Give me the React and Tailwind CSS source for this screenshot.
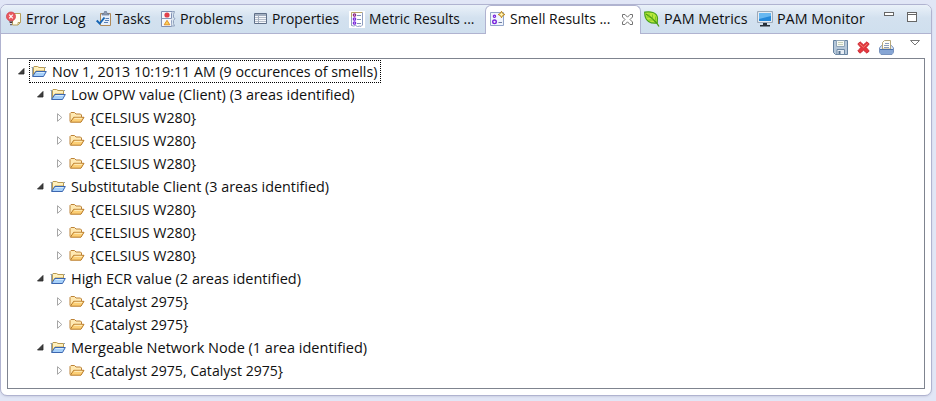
import React, { useLayoutEffect, useRef, useState } from "react";

// Label whose glyphs are condensed to fill exactly `w` pixels.
function Label({ w, children }) {
  const ref = useRef(null);
  const [scale, setScale] = useState(1);
  useLayoutEffect(() => {
    setScale(w / ref.current.offsetWidth);
  }, [w, children]);
  return (
    <span className="block shrink-0 whitespace-nowrap" style={{ width: w }}>
      <span ref={ref} className="inline-block origin-left" style={{ transform: `scaleX(${scale})` }}>
        {children}
      </span>
    </span>
  );
}

function Icon({ children, w = 16, h = 16 }) {
  return (
    <svg className="block shrink-0" width={w} height={h} viewBox={`0 0 ${w} ${h}`} fill="none">
      {children}
    </svg>
  );
}

const ErrorLogIcon = () => (
  <Icon>
    <path d="M6.5 2.5h8v9l-2.500 2.500h-5.500z" fill="#fffdf0" stroke="#b8a05c" />
    <path d="M14.500 11.500h-2.500v2.500" stroke="#b8a05c" />
    <circle cx="5" cy="5.500" r="4.500" fill="#ea5a60" stroke="#d0404c" strokeWidth=".8" />
    <path d="M3.200 3.700l3.600 3.600M6.800 3.700l-3.600 3.600" stroke="#fff" strokeWidth="1.200" />
    <path d="M3 10.500h4l-1 1.500H4zM4.300 13h1.400v1.300H4.300z" fill="#4b3438" />
  </Icon>
);

const TasksIcon = () => (
  <Icon>
    <path d="M4.500 2.500h10v12h-10z" fill="#e6effa" stroke="#b08a58" />
    <path d="M6 4V2.500h2L8.500.500h2l.500 2h2V4z" fill="#8f9db5" stroke="#66758f" strokeWidth=".7" />
    <path d="M9.500 7.500H13M9 9.500h4M8 11.500h4" stroke="#5a80b5" />
    <path d="M.7 9.500l3 3L8.500 6.500" stroke="#1766b4" strokeWidth="2" />
  </Icon>
);

const ProblemsIcon = () => (
  <Icon>
    <path d="M.500.500h11L10.500 3v4l1 1-1 2v5.500H.500z" fill="#f6f8fc" stroke="#8090b4" />
    <path d="M.500 7.500h10" stroke="#8998b8" />
    <path d="M11.500.500h2l-1 3v3l1.500 1-1.500 2v3l1 2.500h-3" fill="#dbe6f1" stroke="#91a2bd" />
    <circle cx="6" cy="4" r="2.600" fill="#e2414c" />
    <path d="M6 9.300l2.800 4.500H3.200z" fill="#fbd257" stroke="#dd8620" strokeWidth=".9" />
  </Icon>
);

const PropertiesIcon = () => (
  <Icon>
    <path d="M.500 2.500h12v10H.500z" fill="#f5f7fb" stroke="#607089" />
    <path d="M1 3h11v2H1z" fill="#a3afc0" />
    <path d="M1 6.500h11M1 8.500h11M1 10.500h11" stroke="#b5bdc9" />
    <path d="M4.500 5v7" stroke="#a3afc0" />
  </Icon>
);

const Bullets = () => (
  <>
    <circle cx="5.500" cy="4" r="1.200" stroke="#8b2585" strokeWidth="1.200" />
    <circle cx="5.500" cy="8" r="1.200" stroke="#7a25dc" strokeWidth="1.300" />
    <circle cx="5.500" cy="12" r="1.200" stroke="#7a25dc" strokeWidth="1.300" />
  </>
);

const MetricIcon = () => (
  <Icon h={17}>
    <path d="M0 0h16v17H0z" fill="#fff" />
    <path d="M2.500 14.500V1.500h11" stroke="#b7a46b" />
    <path d="M2.500 6v8.500l2 .500 2-.500 2 1 2.500-.500 1 .500 1.500-1.500V1.500" stroke="#8e9dc0" />
    <Bullets />
    <path d="M8 4.500h4M8 8.500h4M8 12.500h4" stroke="#7f91b4" />
  </Icon>
);

const SmellIcon = () => (
  <Icon>
    <path d="M.500 1.500h13v13H.500z" fill="#f1f5fd" stroke="#93a5c9" />
    <circle cx="4.500" cy="5.200" r="1.100" stroke="#7a25dc" strokeWidth="1.200" />
    <circle cx="4.500" cy="10.800" r="1.800" stroke="#7a25dc" strokeWidth="1.400" />
    <path d="M8.500 11.500h3.500" stroke="#6d7da0" />
    <path d="M11.500.300l1.100 2.100 2.200 1.100-2.200 1.100-1.100 2.100-1.100-2.100-2.200-1.100 2.200-1.100z" fill="#fff3b0" stroke="#b98213" />
  </Icon>
);

const LeafIcon = () => (
  <Icon>
    <path d="M.700 1.200C6 .200 13 1 13.500 7l-.300 5C7 13 .500 10.500.700 1.200z" fill="#b9e83a" stroke="#4aa31c" strokeWidth="1.200" />
    <path d="M2 3c4 2.500 8 5.500 11 9.500l2 3" stroke="#4c9e12" strokeWidth="1.300" />
    <path d="M5 2.500v2.500M8.500 3.500v4M11.500 5.500v4M2.500 6h3.500M4.500 9h5" stroke="#70bc24" strokeWidth=".8" />
  </Icon>
);

const MonitorIcon = () => (
  <Icon>
    <path d="M1.500 1.500h13v9h-13z" fill="#2589da" stroke="#e8edf3" />
    <path d="M.500.500h15v11H.500z" stroke="#9daab8" />
    <path d="M2 2h12v3L2 8z" fill="#68b8f1" />
    <path d="M6 12h4v2h3v1.500H3V14h3z" fill="#28313b" />
  </Icon>
);

const CloseIcon = () => (
  <Icon w={11} h={11}>
    <path d="M.500.500h2.500l2.500 2.700L8 .500h2.500V3L8 5.500 10.500 8v2.500H8L5.500 7.800 3 10.500H.500V8L3 5.500.500 3z" fill="#fff" stroke="#737373" />
  </Icon>
);

const SaveIcon = () => (
  <Icon w={15} h={15}>
    <path d="M.500.500h14v14h-12l-2-2z" fill="#b5c7d9" stroke="#6683a1" />
    <path d="M3.500.500h8v6h-8z" fill="#f7f9f3" stroke="#8fa4b8" />
    <path d="M5 2.500h5M5 4.500h5" stroke="#c5cfb8" />
    <path d="M4 9.500h7.500v5H4z" fill="#e6edf4" stroke="#6d88a4" />
    <path d="M5.500 11h2v3h-2z" fill="#54718f" />
  </Icon>
);

const DeleteIcon = () => (
  <Icon w={13} h={13}>
    <path d="M.800 3L3 .800l3.500 3L10 .800 12.200 3 9.200 6.500l3 3.500-2.200 2.200-3.500-3-3.500 3L.800 10l3-3.500z" fill="#e5383f" stroke="#cb2c36" />
    <path d="M2.500 2.700l4 3.500 4-3.500" stroke="#ef8070" />
  </Icon>
);

const PrintIcon = () => (
  <Icon w={15} h={15}>
    <path d="M2.500 5.500h10l2 2.500v4.500l-1.500 2H2l-1.500-2V8z" fill="#dbe6f5" stroke="#7792bd" />
    <path d="M3.500 9V2.500l2-2h6V9z" fill="#fffef6" stroke="#b5a77b" />
    <path d="M6 3.500h4M5 5.500h5M5 7.500h5" stroke="#7f93b5" strokeWidth=".9" />
    <path d="M1 9.500h13v3l-1 1.500H2l-1-1.500z" fill="#86a5d4" />
    <path d="M1 9.500h13" stroke="#4d72ac" />
  </Icon>
);

const OpenFolder = () => (
  <Icon w={16} h={13}>
    <path d="M2.500 10.500v-8M2.500 2.500l.500-1h3.500l1.500 1h5.500v3.500H5l-2.500 4" fill="#fff1bd" stroke="#b99a52" />
    <path d="M.500 2.500h2M13.500 2.500h1.500M1.500 3v8" stroke="#8ea0b0" />
    <path d="M4.800 6.500h10.500l-2.800 5H1.600z" fill="#a6d0fa" stroke="#3c67b0" />
    <path d="M5.500 7.500h8" stroke="#d7edff" />
  </Icon>
);

const ClosedFolder = () => (
  <Icon w={16} h={13}>
    <path d="M1 10.500v-8l1-1h3.500l1.500 1.500h4.500l1 1v2.500" fill="#ffe9b2" stroke="#bd8338" />
    <path d="M4.700 6.300h10.300l-3 4.900H1.400z" fill="#fccf76" stroke="#b87a28" />
    <path d="M5.300 7.300h8" stroke="#fff0c4" />
  </Icon>
);

const Expanded = () => (
  <Icon w={7} h={7}>
    <path d="M6 .500v5.500H.500z" fill="#404040" stroke="#262626" strokeWidth=".8" />
  </Icon>
);

const Collapsed = () => (
  <Icon w={6} h={9}>
    <path d="M.500.700v7.600l4.300-3.800z" fill="#fff" stroke="#a6a6a6" />
  </Icon>
);

const tabs = [
  { text: "Error Log", icon: ErrorLogIcon, cell: "w-[90px] pl-[5px] gap-1", w: 60 },
  { text: "Tasks", icon: TasksIcon, cell: "w-[65px] pl-[5px] gap-[3px]", w: 35 },
  { text: "Problems", icon: ProblemsIcon, cell: "w-[93px] pl-[5px] gap-[3px]", w: 63 },
  { text: "Properties", icon: PropertiesIcon, cell: "w-[95px] pl-[5px] gap-[2px]", w: 67 },
  { text: "Metric Results ...", icon: MetricIcon, cell: "w-[141px] pl-[5px] gap-1", w: 105 },
  { text: "Smell Results ...", icon: SmellIcon, active: true, w: 100 },
  { text: "PAM Metrics", icon: LeafIcon, cell: "w-[111px] pl-[3px] gap-1", w: 84 },
  { text: "PAM Monitor", icon: MonitorIcon, cell: "w-[125px] pl-[5px] gap-1", w: 88 },
];

const celsius = { level: 2, text: "{CELSIUS W280}", w: 106 };
const catalyst = { level: 2, text: "{Catalyst 2975}", w: 98 };
const rows = [
  { level: 0, text: "Nov 1, 2013 10:19:11 AM (9 occurences of smells)", w: 325 },
  { level: 1, text: "Low OPW value (Client) (3 areas identified)", w: 284 },
  celsius,
  celsius,
  celsius,
  { level: 1, text: "Substitutable Client (3 areas identified)", w: 258 },
  celsius,
  celsius,
  celsius,
  { level: 1, text: "High ECR value (2 areas identified)", w: 230 },
  catalyst,
  catalyst,
  { level: 1, text: "Mergeable Network Node (1 area identified)", w: 296 },
  { level: 2, text: "{Catalyst 2975, Catalyst 2975}", w: 193 },
];

const indent = ["pl-[9px]", "pl-[28px]", "pl-[48px]"];

function Tab({ text, icon: Glyph, cell, active, w }) {
  if (active) {
    return (
      <div className="flex h-[29px] w-[156px] shrink-0 items-center rounded-t-[6px] border-x border-t border-[#b0b3d0] bg-white pb-[2px] pl-1">
        <Glyph />
        <div className="ml-1">
          <Label w={w}>{text}</Label>
        </div>
        <div className="ml-[12px]">
          <CloseIcon />
        </div>
      </div>
    );
  }
  return (
    <div className={`flex h-7 shrink-0 items-center ${cell}`}>
      <Glyph />
      <Label w={w}>{text}</Label>
    </div>
  );
}

function Row({ level, text, w }) {
  return (
    <div className={`flex h-[23px] items-center ${indent[level]}`}>
      <div className={level === 2 ? "w-[10px] pl-[1px]" : "w-[12px] pl-[1px]"}>
        {level === 2 ? <Collapsed /> : <Expanded />}
      </div>
      <div
        className={
          level === 0
            ? "flex h-[23px] w-[352px] items-center border border-dotted border-black pl-[1px]"
            : level === 1
              ? "flex h-[23px] items-center pl-[2px]"
              : "flex h-[23px] items-center pl-[3px]"
        }
      >
        {level === 2 ? <ClosedFolder /> : <OpenFolder />}
        <div className="ml-[5px]">
          <Label w={w}>{text}</Label>
        </div>
      </div>
    </div>
  );
}

export default function App() {
  return (
    <div className="h-[401px] w-[936px] overflow-hidden bg-[#e1e6f6] pt-1 font-['Open_Sans','Noto_Sans',sans-serif] text-[14.5px] leading-[22px] text-[#101010]">
      <div className="flex h-[392px] w-[932px] flex-col overflow-hidden rounded-[7px] border border-[#b0b3d0] bg-white shadow-[0_1px_2px_#cdd1e3]">
        <div className="flex h-[29px] shrink-0 items-start bg-[linear-gradient(#eaf1f9,#d3e1ef_45%,#cfdfee)] shadow-[inset_0_-1px_0_#b0b3d0]">
          {tabs.map((tab) => (
            <Tab key={tab.text} {...tab} />
          ))}
          <div className="flex gap-[13px] pl-[7px] pt-[7px]">
            <div className="h-[4px] w-[10px] border border-[#666] bg-white" />
            <div className="h-[10px] w-[10px] border border-[#666] bg-white">
              <div className="mt-[1px] h-px bg-[#666]" />
            </div>
          </div>
        </div>
        <div className="flex h-[24px] shrink-0 items-start pl-[832px] pt-[6px]">
          <SaveIcon />
          <div className="ml-[9px] mt-[1px]">
            <DeleteIcon />
          </div>
          <div className="ml-[9px]">
            <PrintIcon />
          </div>
          <div className="ml-[16px]">
            <Icon w={10} h={6}>
              <path d="M.500.500h9L5 5z" fill="#fff" stroke="#777" />
            </Icon>
          </div>
        </div>
        <div className="ml-[6px] h-[331px] w-[918px] border border-[#7f848f] pt-[1px]">
          {rows.map((row, i) => (
            <Row key={i} {...row} />
          ))}
        </div>
      </div>
    </div>
  );
}
